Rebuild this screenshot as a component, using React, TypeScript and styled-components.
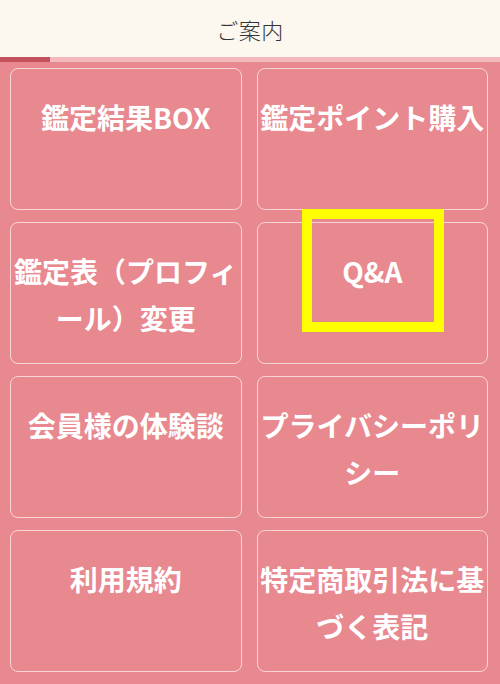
import React from 'react';
import styled, { createGlobalStyle } from 'styled-components';

const GlobalStyle = createGlobalStyle`
    html, body {
        margin: 0;
        padding: 0;
        background: #e8888f;
    }
    body {
        font-family: "Noto Sans CJK JP", "Noto Sans", sans-serif;
    }
`

const Page = styled.div`
    position: relative;
    width: 500px;
    height: 684px;
    overflow: hidden;
    background-color: #e8888f;
`

const Header = styled.header`
    height: 57px;
    display: flex;
    align-items: center;
    justify-content: center;
    background-color: #fdf8ef;
`

const Title = styled.h1`
    margin: 0;
    font-size: 22px;
    font-weight: 300;
    color: #333;
    letter-spacing: 0.5px;
`

const Progress = styled.div`
    height: 5px;
    background-color: #f4b9bd;
`

const ProgressFill = styled.div`
    height: 100%;
    background-color: #c4525e;
`

const Grid = styled.nav`
    display: grid;
    grid-template-columns: 1fr 1fr;
    gap: 12px 15px;
    padding: 6px 12px 0 10px;
`

const Card = styled.a`
    height: 142px;
    box-sizing: border-box;
    padding-top: 25px;
    border: 1px solid rgba(255, 255, 255, 0.65);
    border-radius: 8px;
    color: #fff;
    text-decoration: none;
    text-align: center;
    font-size: 28px;
    font-weight: 700;
    line-height: 47px;
    line-break: anywhere;
    overflow: hidden;
`

// yellow marker drawn over the Q&A card in the screenshot
const Highlight = styled.div`
    position: absolute;
    left: 302px;
    top: 209px;
    width: 142px;
    height: 123px;
    box-sizing: border-box;
    border: 10px solid #ffff00;
    pointer-events: none;
`

const links = [
    '鑑定結果BOX',
    '鑑定ポイント購入',
    '鑑定表（プロフィール）変更',
    'Q&A',
    '会員様の体験談',
    'プライバシーポリシー',
    '利用規約',
    '特定商取引法に基づく表記',
]

const App = () => {
    const progress = 10

    return (
        <Page>
            <GlobalStyle />
            <Header>
                <Title>ご案内</Title>
            </Header>
            <Progress>
                <ProgressFill style={{ width: `${progress}%` }} />
            </Progress>
            <Grid>
                {links.map(label => (
                    <Card key={label} href='#'>{label}</Card>
                ))}
            </Grid>
            <Highlight />
        </Page>
    );
};

export default App;
